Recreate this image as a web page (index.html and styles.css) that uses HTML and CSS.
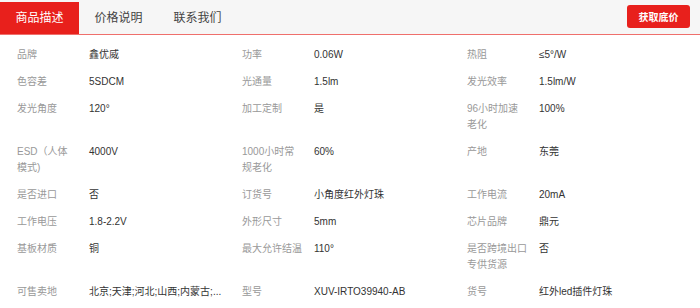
FILE: index.html
```html
<!DOCTYPE html>
<html lang="zh-CN">
<head>
<meta charset="UTF-8">
<meta name="viewport" content="width=device-width, initial-scale=1.0">
<title>商品描述</title>
<link rel="stylesheet" href="styles.css">
</head>
<body>
<div class="tabbar">
<div class="tab active">商品描述</div>
<div class="tab">价格说明</div>
<div class="tab">联系我们</div>
<button class="price-btn">获取底价</button>
</div>

<div class="attrs">
<div class="cell"><span class="k">品牌</span><span class="v">鑫优威</span></div>
<div class="cell"><span class="k">功率</span><span class="v">0.06W</span></div>
<div class="cell"><span class="k">热阻</span><span class="v">≤5°/W</span></div>

<div class="cell"><span class="k">色容差</span><span class="v">5SDCM</span></div>
<div class="cell"><span class="k">光通量</span><span class="v">1.5lm</span></div>
<div class="cell"><span class="k">发光效率</span><span class="v">1.5lm/W</span></div>

<div class="cell"><span class="k">发光角度</span><span class="v">120°</span></div>
<div class="cell"><span class="k">加工定制</span><span class="v">是</span></div>
<div class="cell"><span class="k">96小时加速老化</span><span class="v">100%</span></div>

<div class="cell"><span class="k">ESD（人体模式)</span><span class="v">4000V</span></div>
<div class="cell"><span class="k">1000小时常规老化</span><span class="v">60%</span></div>
<div class="cell"><span class="k">产地</span><span class="v">东莞</span></div>

<div class="cell"><span class="k">是否进口</span><span class="v">否</span></div>
<div class="cell"><span class="k">订货号</span><span class="v">小角度红外灯珠</span></div>
<div class="cell"><span class="k">工作电流</span><span class="v">20mA</span></div>

<div class="cell"><span class="k">工作电压</span><span class="v">1.8-2.2V</span></div>
<div class="cell"><span class="k">外形尺寸</span><span class="v">5mm</span></div>
<div class="cell"><span class="k">芯片品牌</span><span class="v">鼎元</span></div>

<div class="cell"><span class="k">基板材质</span><span class="v">铜</span></div>
<div class="cell"><span class="k">最大允许结温</span><span class="v">110°</span></div>
<div class="cell"><span class="k">是否跨境出口专供货源</span><span class="v">否</span></div>

<div class="cell"><span class="k">可售卖地</span><span class="v">北京;天津;河北;山西;内蒙古;...</span></div>
<div class="cell"><span class="k">型号</span><span class="v">XUV-IRTO39940-AB</span></div>
<div class="cell"><span class="k">货号</span><span class="v">红外led插件灯珠</span></div>
</div>
</body>
</html>
```

FILE: styles.css
```css
*{margin:0;padding:0;box-sizing:border-box;}
body{background:#fff;color:#333;font-family:"Liberation Sans","Noto Sans CJK SC",sans-serif;width:700px;}

/* tab bar */
.tabbar{display:flex;align-items:flex-end;height:35px;background:#f6f6f6;border-bottom:1px solid #ef6f6c;}
.tab{width:79px;height:32px;line-height:32px;text-align:center;font-size:12px;color:#444;}
.tab.active{background:#e8201c;color:#fff;}
.price-btn{align-self:center;margin:0 10px 1px auto;width:63px;height:23px;border:0;border-radius:3px;background:#e8201c;color:#fff;font-family:inherit;font-size:10px;font-weight:bold;}

/* attribute table */
.attrs{display:grid;grid-template-columns:repeat(3,225px);padding:6px 0 0 17px;font-size:10px;line-height:16px;}
.cell{display:flex;align-items:flex-start;padding:6px 17px 5px 0;min-width:0;}
.k{flex:0 0 60.3px;margin-right:11.7px;color:#999;}
.v{flex:1;min-width:0;color:#333;white-space:nowrap;}
```
